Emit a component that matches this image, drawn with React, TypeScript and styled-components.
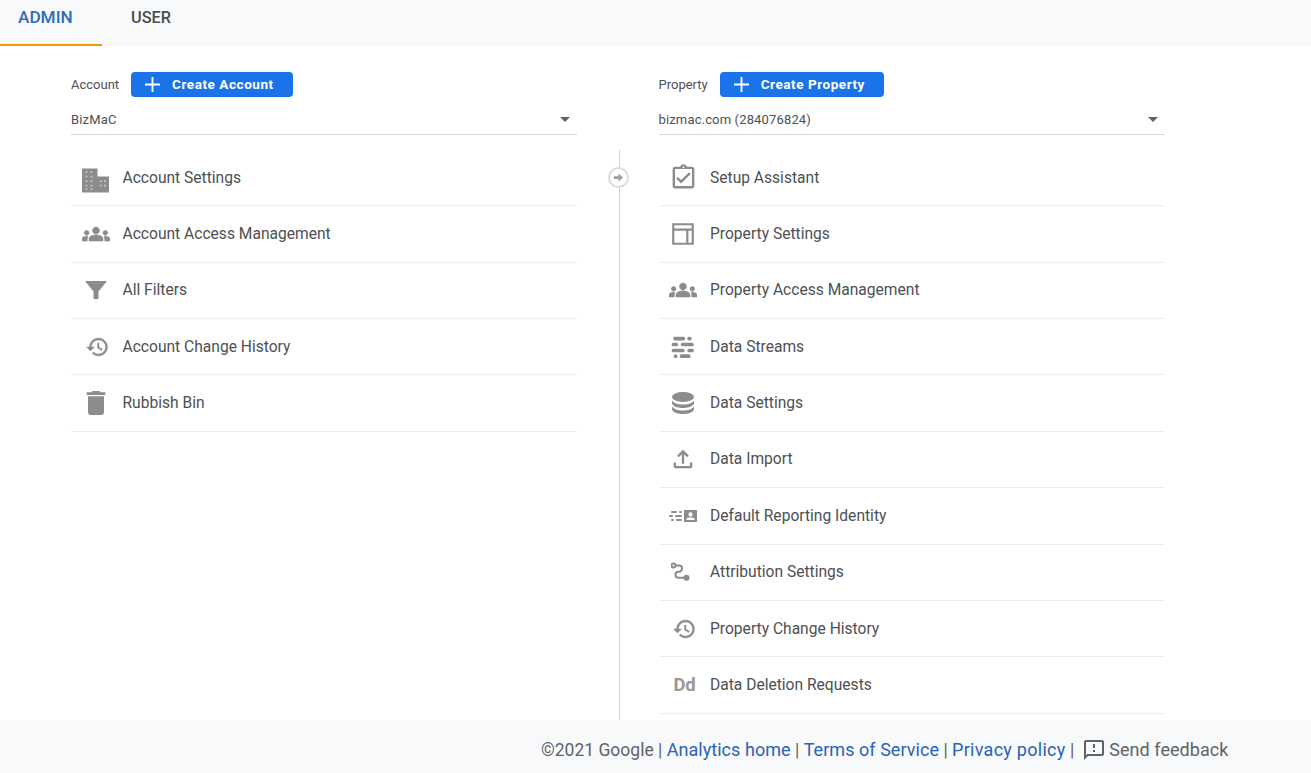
import React from 'react';
import styled, { createGlobalStyle } from 'styled-components';

const GlobalStyle = createGlobalStyle`
  html, body {
    margin: 0;
    padding: 0;
    height: 100%;
    background: #fff;
    font-family: Roboto, "Liberation Sans", sans-serif;
  }
  * { box-sizing: border-box; }
`;

const Ic = ({ d, size = 24, vb = '0 0 24 24', bold = 0 }: { d: string; size?: number; vb?: string; bold?: number }) => (
  <svg width={size} height={size} viewBox={vb} fill="currentColor" stroke="currentColor" strokeWidth={bold}>
    <path d={d} />
  </svg>
);

const paths = {
  groups:
    'M4 13c1.1 0 2-.9 2-2s-.9-2-2-2-2 .9-2 2 .9 2 2 2zm1.13 1.1c-.37-.06-.74-.1-1.13-.1-.99 0-1.93.21-2.78.58C.48 14.9 0 15.62 0 16.43V18h4.5v-1.61c0-.83.23-1.61.63-2.29zM20 13c1.1 0 2-.9 2-2s-.9-2-2-2-2 .9-2 2 .9 2 2 2zm4 3.43c0-.81-.48-1.53-1.22-1.85-.85-.37-1.79-.58-2.78-.58-.39 0-.76.04-1.13.1.4.68.63 1.46.63 2.29V18H24v-1.57zm-7.76-2.78c-1.17-.52-2.61-.9-4.24-.9-1.63 0-3.07.39-4.24.9C6.68 14.13 6 15.21 6 16.39V18h12v-1.61c0-1.18-.68-2.26-1.76-2.74zM12 12c1.66 0 3-1.34 3-3s-1.34-3-3-3-3 1.34-3 3 1.34 3 3 3z',
  filter: 'M1 3h22L14.500 13.500V21h-5v-7.500z',
  history:
    'M13 3c-4.97 0-9 4.03-9 9H1l3.89 3.89.07.14L9 12H6c0-3.87 3.13-7 7-7s7 3.13 7 7-3.13 7-7 7c-1.93 0-3.68-.79-4.94-2.06l-1.42 1.42C8.27 19.99 10.51 21 13 21c4.97 0 9-4.03 9-9s-4.03-9-9-9zm-1 5v5l4.28 2.54.72-1.21-3.5-2.08V8H12z',
  trash: 'M6 19c0 1.1.9 2 2 2h8c1.1 0 2-.9 2-2V7H6v12zM19 4h-3.5l-1-1h-5l-1 1H5v2h14V4z',
  clipboard:
    'M19 3h-4.18C14.4 1.84 13.3 1 12 1s-2.4.84-2.82 2H5c-1.1 0-2 .9-2 2v14c0 1.1.9 2 2 2h14c1.1 0 2-.9 2-2V5c0-1.1-.9-2-2-2zm-7-.25c.22 0 .41.1.55.25.12.13.2.31.2.5 0 .41-.34.75-.75.75s-.75-.34-.75-.75c0-.19.08-.37.2-.5.14-.15.33-.25.55-.25zM19 19H5V5h14v14zM18 9l-1.41-1.42L10 14.17l-2.59-2.58L6 13l4 4z',
  layout: 'M2 2h20v20H2V2zm2 2v3h16V4H4zm0 5v11h11V9H4zm13 0v11h3V9h-3z',
  upload:
    'M18 15v3H6v-3H4v3c0 1.1.9 2 2 2h12c1.1 0 2-.9 2-2v-3h-2zM7 9l1.41 1.41L11 7.83V16h2V7.83l2.59 2.58L17 9l-5-5-5 5z',
  feedback:
    'M20 2H4c-1.1 0-2 .9-2 2v18l4-4h14c1.1 0 2-.9 2-2V4c0-1.1-.9-2-2-2zm0 14H5.17L4 17.17V4h16v12zM11 12h2v2h-2zm0-6h2v4h-2z',
};

const BuildingIcon = () => (
  <svg width="28" height="32" viewBox="0 0 28 32" fill="currentColor">
    <path d="M0 6.500h15.500v8H27v16H0z" />
    <g fill="#bdbdbd">
      {[10, 14.500, 19, 23.500, 27].map((y) => (
        <React.Fragment key={y}>
          <rect x="3.500" y={y - 0.8} width="2" height="1.800" />
          <rect x="8.500" y={y - 0.8} width="2" height="1.800" />
        </React.Fragment>
      ))}
      {[19, 23.500].map((y) => (
        <React.Fragment key={y}>
          <rect x="18" y={y - 0.8} width="2" height="1.800" />
          <rect x="22" y={y - 0.8} width="2" height="1.800" />
        </React.Fragment>
      ))}
    </g>
  </svg>
);

const StreamsIcon = () => (
  <svg width="26" height="26" viewBox="0 0 24 24" fill="currentColor">
    <rect x="3" y="2.500" width="11" height="3.400" rx="1.700" />
    <rect x="16" y="2.500" width="4" height="3.400" rx="1.700" />
    <rect x="1.500" y="8" width="6" height="3.400" rx="1.700" />
    <rect x="10" y="8" width="12" height="3.400" rx="1.700" />
    <rect x="1.500" y="13.500" width="12" height="3.400" rx="1.700" />
    <rect x="16" y="13.500" width="6" height="3.400" rx="1.700" />
    <circle cx="5.200" cy="20.500" r="1.700" />
    <rect x="9" y="18.800" width="10" height="3.400" rx="1.700" />
  </svg>
);

const DatabaseIcon = () => (
  <svg width="24" height="24" viewBox="0 0 24 24" fill="currentColor">
    <ellipse cx="12" cy="6" rx="11" ry="5" />
    <path d="M1 9.200c1.200 2.800 5.600 4.300 11 4.300s9.800-1.500 11-4.300V12c0 2.800-4.900 5-11 5S1 14.800 1 12z" />
    <path d="M1 15.200c1.200 2.800 5.600 4.300 11 4.300s9.800-1.500 11-4.300V18c0 2.800-4.900 5-11 5S1 20.800 1 18z" />
  </svg>
);

const IdentityIcon = () => (
  <svg width="28" height="24" viewBox="0 0 28 24" fill="currentColor">
    <rect x="2" y="7" width="6" height="2" rx="1" />
    <rect x="10" y="7" width="3" height="2" rx="1" />
    <rect x="0" y="11" width="4" height="2" rx="1" />
    <rect x="6" y="11" width="7" height="2" rx="1" />
    <rect x="2" y="15" width="3" height="2" rx="1" />
    <rect x="7" y="15" width="6" height="2" rx="1" />
    <path
      fillRule="evenodd"
      d="M15 6h13v12H15V6zm6.500 2.300a2.100 2.100 0 1 0 0 4.200 2.100 2.100 0 0 0 0-4.200zM17.500 16h8v-.9c0-1.200-2.400-1.900-4-1.900s-4 .7-4 1.900v.9z"
    />
  </svg>
);

const AttributionIcon = () => (
  <svg width="24" height="24" viewBox="0 0 24 24" fill="none" stroke="currentColor" strokeWidth="2">
    <circle cx="2.500" cy="5.500" r="2" />
    <path d="M4.500 5.500H8a3.100 3.100 0 0 1 0 6.200h-.5a3 3 0 0 0 0 6H15" />
    <circle cx="15.500" cy="17.700" r="3" fill="currentColor" stroke="none" />
  </svg>
);

const Page = styled.div`
  display: flex;
  flex-direction: column;
  height: 100vh;
  overflow: hidden;
`;

const TabBar = styled.nav`
  display: flex;
  height: 46px;
  background: #f8f9fa;
  flex: none;
`;

const Tab = styled.div<{ $active?: boolean }>`
  padding: 8px 0 0;
  width: ${(p) => (p.$active ? '102px' : 'auto')};
  margin-left: ${(p) => (p.$active ? '0' : '29px')};
  padding-left: ${(p) => (p.$active ? '18px' : '0')};
  font-size: ${(p) => (p.$active ? '17.200px' : '16.300px')};
  line-height: 19px;
  font-weight: 500;
  color: ${(p) => (p.$active ? '#2f6bc0' : '#4a4d50')};
  border-bottom: ${(p) => (p.$active ? '2px solid #f29900' : 'none')};
`;

const Main = styled.main`
  flex: 1;
  min-height: 0;
  display: grid;
  grid-template-columns: 506px 81.500px 506px;
  grid-template-rows: 104px 1fr;
  padding-left: 71px;
`;

const Head = styled.div`
  padding-top: 26px;
`;

const HeadRow = styled.div`
  display: flex;
  align-items: center;
  gap: 12px;
  height: 25px;
`;

const HeadLabel = styled.span`
  font-size: 13px;
  color: #4d5054;
`;

const CreateButton = styled.div`
  display: flex;
  align-items: center;
  height: 25px;
  padding: 0 19px 1px 14px;
  gap: 12px;
  border-radius: 4px;
  background: #1a73e8;
  color: #fff;
  font-size: 13.500px;
  letter-spacing: 0.550px;
  font-weight: 700;
`;

const Select = styled.div`
  display: flex;
  align-items: center;
  justify-content: space-between;
  height: 38px;
  padding: 7px 7px 0 0;
  border-bottom: 1px solid #d5d7d9;
  font-size: 13px;
  letter-spacing: 0.150px;
  color: #4d5054;
`;

const Caret = styled.span`
  width: 0;
  height: 0;
  border-left: 5px solid transparent;
  border-right: 5px solid transparent;
  border-top: 5px solid #5f6368;
`;

const Spacer = styled.div``;

const Divider = styled.div`
  position: relative;
  width: 1px;
  margin-left: 42px;
  background: #cfd1d3;
`;

const ArrowBadge = styled.span`
  position: absolute;
  top: 17px;
  left: -11px;
  width: 21px;
  height: 21px;
  display: flex;
  align-items: center;
  justify-content: center;
  border: 2px solid #dadcde;
  border-radius: 50%;
  background: #fff;
  color: #9aa0a6;
`;

const List = styled.ul`
  list-style: none;
  margin: 0;
  padding: 0;
`;

const Row = styled.li`
  display: flex;
  align-items: center;
  height: 56.360px;
  border-bottom: 1px solid #eceded;
  font-size: 15.600px;
  color: #4d5054;
`;

const IconSlot = styled.span`
  flex: none;
  display: flex;
  align-items: center;
  justify-content: center;
  width: 49px;
  margin-right: 2.500px;
  color: #8c8c8c;
`;

const DdGlyph = styled.span`
  margin-left: 3px;
  font-size: 18.500px;
  font-weight: 700;
  letter-spacing: -0.200px;
  color: #979797;
`;

const Footer = styled.footer`
  flex: none;
  height: 53px;
  display: flex;
  align-items: center;
  padding: 6px 0 0 541px;
  background: #f8f9fa;
  font-size: 17.500px;
  color: #5f6368;
  white-space: pre;
`;

const FootLink = styled.span<{ $wide?: boolean }>`
  color: #2a62b8;
  font-size: 18px;
  letter-spacing: ${(p) => (p.$wide ? '0.280px' : '0.050px')};
`;

const Feedback = styled.span`
  display: flex;
  align-items: center;
  gap: 3px;
  margin-left: 8px;
  color: #5f6368;
  font-size: 18px;
  letter-spacing: 0.050px;
`;

const historyIcon = <Ic d={paths.history} vb="-1.500 0 24 24" bold={0.4} />;

const accountItems: [React.ReactNode, string][] = [
  [<BuildingIcon />, 'Account Settings'],
  [<Ic d={paths.groups} size={28} bold={0.5} />, 'Account Access Management'],
  [<Ic d={paths.filter} />, 'All Filters'],
  [historyIcon, 'Account Change History'],
  [<Ic d={paths.trash} size={32} />, 'Rubbish Bin'],
];

const propertyItems: [React.ReactNode, string][] = [
  [<Ic d={paths.clipboard} size={29} />, 'Setup Assistant'],
  [<Ic d={paths.layout} size={26} />, 'Property Settings'],
  [<Ic d={paths.groups} size={28} bold={0.5} />, 'Property Access Management'],
  [<StreamsIcon />, 'Data Streams'],
  [<DatabaseIcon />, 'Data Settings'],
  [<Ic d={paths.upload} size={28} />, 'Data Import'],
  [<IdentityIcon />, 'Default Reporting Identity'],
  [<AttributionIcon />, 'Attribution Settings'],
  [historyIcon, 'Property Change History'],
  [<DdGlyph>Dd</DdGlyph>, 'Data Deletion Requests'],
];

const Plus = () => (
  <svg width="15" height="15" viewBox="0 0 16 16" fill="#fff">
    <path d="M7 0h2v7h7v2H9v7H7V9H0V7h7z" />
  </svg>
);

export default function App() {
  return (
    <Page>
      <GlobalStyle />
      <TabBar>
        <Tab $active>ADMIN</Tab>
        <Tab>USER</Tab>
      </TabBar>
      <Main>
        <Head>
          <HeadRow>
            <HeadLabel>Account</HeadLabel>
            <CreateButton>
              <Plus />
              Create Account
            </CreateButton>
          </HeadRow>
          <Select>
            BizMaC
            <Caret />
          </Select>
        </Head>
        <Spacer />
        <Head>
          <HeadRow>
            <HeadLabel>Property</HeadLabel>
            <CreateButton>
              <Plus />
              Create Property
            </CreateButton>
          </HeadRow>
          <Select>
            bizmac.com (284076824)
            <Caret />
          </Select>
        </Head>
        <List>
          {accountItems.map(([icon, label]) => (
            <Row key={label}>
              <IconSlot>{icon}</IconSlot>
              {label}
            </Row>
          ))}
        </List>
        <Divider>
          <ArrowBadge>
            <svg width="11" height="11" viewBox="0 0 12 12" fill="currentColor">
              <path d="M1 4.500h5V1.500L11 6l-5 4.500v-3H1z" />
            </svg>
          </ArrowBadge>
        </Divider>
        <List>
          {propertyItems.map(([icon, label]) => (
            <Row key={label}>
              <IconSlot>{icon}</IconSlot>
              {label}
            </Row>
          ))}
        </List>
      </Main>
      <Footer>
        {'©2021 Google | '}
        <FootLink>Analytics home</FootLink>
        {' | '}
        <FootLink>Terms of Service</FootLink>
        {' | '}
        <FootLink $wide>Privacy policy</FootLink>
        {' |'}
        <Feedback>
          <Ic d={paths.feedback} />
          Send feedback
        </Feedback>
      </Footer>
    </Page>
  );
}
